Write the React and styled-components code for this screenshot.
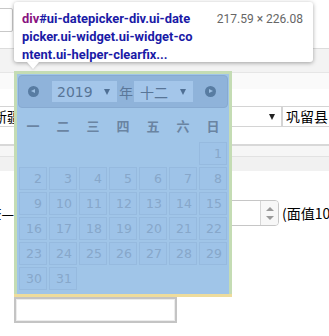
import React from 'react';
import styled, { createGlobalStyle } from "styled-components";

const GlobalStyle = createGlobalStyle`
  html, body {
    margin: 0;
    padding: 0;
    background: #fff;
  }
  body {
    font-family: "Noto Sans CJK SC", "Liberation Sans", sans-serif;
  }
`;

const Screen = styled.div`
  position: relative;
  width: 329px;
  height: 336px;
  overflow: hidden;
  background: #fff;
`;

// page behind the picker

const TopRow = styled.div`
  height: 48px;
  display: flex;
  align-items: flex-start;
`;

const SmallInput = styled.div`
  margin-top: 8px;
  margin-left: -87px;
  width: 100px;
  height: 24px;
  box-sizing: border-box;
  border: 1px solid #c8c8c8;
  border-radius: 2px;
  background: #fff;
`;

const Stripe = styled.div`
  height: ${(p) => p.$h}px;
  box-sizing: border-box;
  border-top: ${(p) => p.$line || 1}px solid ${(p) => p.$lineColor || "#dedede"};
  background: ${(p) => p.$bg || "#f5f5f5"};
`;

const FormRow = styled.div`
  height: ${(p) => p.$h}px;
  box-sizing: border-box;
  padding-top: ${(p) => p.$top}px;
  display: flex;
  align-items: flex-start;
  font-size: 14px;
  color: #000;
`;

const Select = styled.div`
  flex: none;
  width: ${(p) => p.$w}px;
  margin-left: ${(p) => p.$ml || 0}px;
  height: 21px;
  box-sizing: border-box;
  border: 1px solid #d4d4d4;
  background: #fff;
  display: flex;
  align-items: center;
  justify-content: space-between;
  padding: 0 6px 0 ${(p) => p.$pl || 6}px;
  font-size: 14px;
  line-height: 19px;
  white-space: nowrap;
`;

const Caret = styled.span`
  width: 0;
  height: 0;
  border-left: 3.5px solid transparent;
  border-right: 3.5px solid transparent;
  border-top: 6px solid ${(p) => p.$color || "#222"};
`;

const Label = styled.div`
  flex: none;
  width: 44px;
  margin-left: -30px;
  margin-top: 4px;
  text-align: right;
  white-space: nowrap;
  font-size: 14px;
  line-height: 18px;
`;

const NumberInput = styled.div`
  flex: none;
  width: 265px;
  height: 26px;
  box-sizing: border-box;
  border: 1px solid #c6c6c6;
  border-radius: 0 4px 4px 0;
  display: flex;
  justify-content: flex-end;
  background: #fff;
`;

const Spinner = styled.div`
  width: 17px;
  border-left: 1px solid #d6d6d6;
  display: flex;
  flex-direction: column;
  align-items: center;
  justify-content: center;
  gap: 5px;
  background: #f7f7f7;
  border-radius: 0 3px 3px 0;
`;

const SpinArrow = styled.span`
  width: 0;
  height: 0;
  border-left: 4px solid transparent;
  border-right: 4px solid transparent;
  ${(p) => (p.$up ? "border-bottom" : "border-top")}: 4px solid #9a9a9a;
`;

const Note = styled.div`
  margin-left: 3px;
  margin-top: 4px;
  white-space: nowrap;
  font-size: 14px;
  line-height: 18px;
`;

const DateInput = styled.div`
  margin-left: 14px;
  width: 163px;
  height: 26px;
  box-sizing: border-box;
  border: 2px solid #c4c4c4;
  box-shadow: inset 0 0 0 1px #ececec;
  background: #fff;
`;

// datepicker (with devtools highlight)

const Picker = styled.div`
  position: absolute;
  left: 14px;
  top: 71px;
  width: 218px;
  height: 226px;
  box-sizing: border-box;
  padding: 3px 3px 0;
  background: #c4dcb4;
  border-bottom: 3px solid #eedc9c;
  font-family: "DejaVu Sans", Verdana, sans-serif;
`;

const Content = styled.div`
  height: 100%;
  box-sizing: border-box;
  padding: 1px;
  background: #a0c5e8;
`;

const Header = styled.div`
  height: 33px;
  box-sizing: border-box;
  border: 1px solid #87aad1;
  border-radius: 4px;
  background: #8fb3da;
  display: flex;
  align-items: center;
  padding-left: 9px;
`;

const NavButton = styled.div`
  flex: none;
  width: 11px;
  height: 11px;
  border-radius: 50%;
  background: #587ca2;
  position: relative;
  margin-left: ${(p) => p.$ml || 0}px;

  &::after {
    content: "";
    position: absolute;
    top: 3px;
    ${(p) => (p.$next ? "left: 4px" : "left: 3px")};
    border-top: 2.5px solid transparent;
    border-bottom: 2.5px solid transparent;
    ${(p) => (p.$next ? "border-left" : "border-right")}: 4px solid #9dbfe2;
  }
`;

const PickSelect = styled.div`
  flex: none;
  width: ${(p) => p.$w}px;
  height: 21px;
  margin-left: ${(p) => p.$ml}px;
  background: #a4c6ea;
  display: flex;
  align-items: center;
  justify-content: space-between;
  box-sizing: border-box;
  padding: 0 7px 0 ${(p) => p.$pl}px;
  color: #587597;
  font-size: ${(p) => p.$fs || 14}px;
  font-family: ${(p) => (p.$cjk ? '"Noto Sans CJK SC", sans-serif' : 'inherit')};
`;

const YearChar = styled.span`
  margin-left: 2px;
  font-family: "Noto Sans CJK SC", sans-serif;
  font-size: 14px;
  color: #5b7799;
`;

const WeekRow = styled.div`
  height: 34px;
  display: grid;
  grid-template-columns: repeat(7, 28px);
  column-gap: 2px;
  padding-left: 1px;
  align-items: center;
  font-family: "Noto Sans CJK SC", sans-serif;
  font-weight: 700;
  font-size: 13px;
  color: #6a84a2;
  text-align: center;
`;

const DayGrid = styled.div`
  display: grid;
  grid-template-columns: repeat(7, 28px);
  grid-auto-rows: 23px;
  gap: 2px;
  padding-left: 1px;
`;

const Day = styled.div`
  box-sizing: border-box;
  border: 1px solid ${(p) => (p.$empty ? "transparent" : "#96badf")};
  background: ${(p) => (p.$empty ? "transparent" : "#9ec3e8")};
  text-align: right;
  padding-right: 4px;
  font-size: 12.5px;
  line-height: 21px;
  color: #87a7ca;
`;

// devtools tooltip

const Tip = styled.div`
  position: absolute;
  left: 14px;
  top: 2px;
  width: 299px;
  height: 60px;
  box-sizing: border-box;
  padding: 8px 8px 0 8px;
  background: #fff;
  border-radius: 3px;
  box-shadow: 0 1px 4px rgba(0, 0, 0, 0.35);
  display: flex;
  justify-content: space-between;
  font-family: Roboto, "Liberation Sans", sans-serif;

  &::after {
    content: "";
    position: absolute;
    left: 13px;
    bottom: -7px;
    border-left: 6px solid transparent;
    border-right: 6px solid transparent;
    border-top: 7px solid #fff;
    filter: drop-shadow(0 1px 1px rgba(0, 0, 0, 0.15));
  }
`;

const TipLines = styled.div`
  font-weight: 700;
  font-size: 12.9px;
  line-height: 18px;
  color: #1a1aa6;
`;

const TipLine = styled.div`
  white-space: nowrap;
`;

const TagName = styled.span`
  color: #881280;
`;

const TipSize = styled.div`
  color: #666;
  font-size: 12px;
  line-height: 18px;
  white-space: nowrap;
  padding-right: 2px;
`;

const weekdays = ["一", "二", "三", "四", "五", "六", "日"];

const cells = [
  ...Array(6).fill(null),
  ...Array.from({ length: 31 }, (_, i) => i + 1),
];

export default function App() {
  return (
    <Screen>
      <GlobalStyle />
      <TopRow>
        <SmallInput />
      </TopRow>
      <Stripe $h={24} $bg="#f3f3f3" $lineColor="#dcdcdc" />
      <Stripe $h={17} $bg="#fafafa" $lineColor="#e6e6e6" />
      <FormRow $h={55} $top={17}>
        <Select $w={296} $ml={-14} $pl={6}>
          <span>新疆维吾尔自治区</span>
          <Caret />
        </Select>
        <Select $w={60} $pl={3}>
          <span>巩留县</span>
        </Select>
      </FormRow>
      <Stripe $h={12} $line={2} $bg="#f6f6f6" $lineColor="#d8d8d8" />
      <Stripe $h={15} $bg="#f1f1f1" $lineColor="#e2e2e2" />
      <FormRow $h={126} $top={29}>
        <Label>复查—</Label>
        <NumberInput>
          <Spinner>
            <SpinArrow $up />
            <SpinArrow />
          </Spinner>
        </NumberInput>
        <Note>(面值100元)</Note>
      </FormRow>
      <DateInput />

      <Picker>
        <Content>
          <Header>
            <NavButton />
            <PickSelect $w={65} $ml={13} $pl={5}>
              <span>2019</span>
              <Caret $color="#4f6f94" />
            </PickSelect>
            <YearChar>年</YearChar>
            <PickSelect $w={59} $ml={1} $pl={6} $cjk>
              <span>十二</span>
              <Caret $color="#4f6f94" />
            </PickSelect>
            <NavButton $next $ml={12} />
          </Header>
          <WeekRow>
            {weekdays.map((d) => (
              <span key={d}>{d}</span>
            ))}
          </WeekRow>
          <DayGrid>
            {cells.map((n, i) =>
              n ? <Day key={i}>{n}</Day> : <Day key={i} $empty />
            )}
          </DayGrid>
        </Content>
      </Picker>

      <Tip>
        <TipLines>
          <TipLine>
            <TagName>div</TagName>#ui-datepicker-div.ui-date
          </TipLine>
          <TipLine>picker.ui-widget.ui-widget-co</TipLine>
          <TipLine>ntent.ui-helper-clearfix...</TipLine>
        </TipLines>
        <TipSize>217.59 × 226.08</TipSize>
      </Tip>
    </Screen>
  );
}
